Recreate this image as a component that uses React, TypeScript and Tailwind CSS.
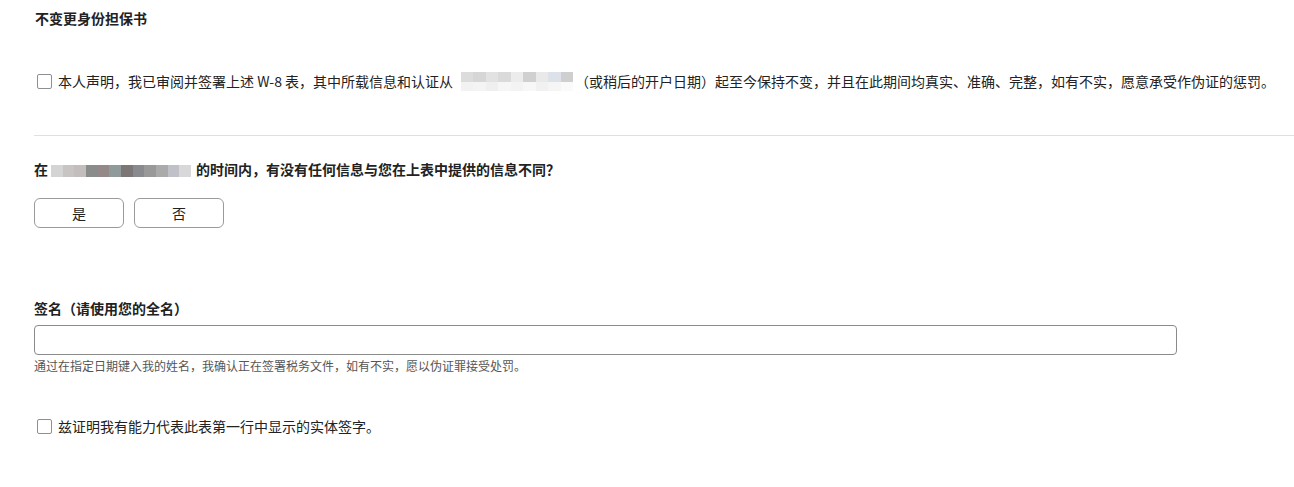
import { useState } from 'react';

const topMask = ['#dcdcdc', '#d6d6d6', '#e2e2e2', '#dadada', '#ececec', '#d0d0d0', '#e9e9e9', '#dde2ea', '#cfcfcf'];
const bottomMask = ['#f2f2f2', '#f4f4f4', '#efefef', '#f6f6f6', '#f3f3f3', '#f7f7f7', '#f1f1f1', '#f5f5f5', '#fafafa'];
const questionMask = ['#d4d4d4', '#c8c4c4', '#c3bdbd', '#8a8c8c', '#948888', '#8f9a9a', '#7c7676', '#888a90', '#999999', '#aaaaaa', '#c0c0c8', '#d8d8db'];

function Checkbox({ checked, onChange }: { checked: boolean; onChange: () => void }) {
    return (
        <button
            type="button"
            onClick={onChange}
            className="w-[15px] h-[15px] shrink-0 border border-[#8f8f8f] rounded-[2px] bg-white flex items-center justify-center"
        >
            {checked && (
                <svg viewBox="0 0 12 12" className="w-[11px] h-[11px]">
                    <path d="M2 6.5l2.5 2.5L10 3.5" fill="none" stroke="#333" strokeWidth="1.6" />
                </svg>
            )}
        </button>
    );
}

export default function App() {
    const [declare, setDeclare] = useState(false);
    const [authority, setAuthority] = useState(false);
    const [changed, setChanged] = useState<string | null>(null);
    const [name, setName] = useState('');

    return (
        <div
            className="min-h-[487px] bg-white pl-[34px] pt-[8px] text-[#222]"
            style={{ fontFamily: '"Noto Sans CJK SC", "Noto Sans", sans-serif' }}
        >
            <h3 className="text-[14px] leading-[20px] font-bold pl-[1px]">不变更身份担保书</h3>

            <label className="mt-[43px] flex items-center gap-[6px] pl-[3px] text-[14px] leading-[20px] whitespace-nowrap">
                <Checkbox checked={declare} onChange={() => setDeclare(!declare)} />
                <span className="flex items-center">
                    本人声明，我已审阅并签署上述 W-8 表，其中所载信息和认证从
                    <span className="inline-flex flex-col w-[112px] h-[19px] ml-[8px] mr-[2px] blur-[0.5px]">
                        <span className="flex h-[10px]">
                            {topMask.map((c, i) => (
                                <span key={i} className="flex-1" style={{ background: c }} />
                            ))}
                        </span>
                        <span className="flex h-[9px]">
                            {bottomMask.map((c, i) => (
                                <span key={i} className="flex-1" style={{ background: c }} />
                            ))}
                        </span>
                    </span>
                    （或稍后的开户日期）起至今保持不变，并且在此期间均真实、准确、完整，如有不实，愿意承受作伪证的惩罚。
                </span>
            </label>

            <div className="mt-[44px] border-t border-[#e0e0e0]" />

            <p className="mt-[23px] flex items-center text-[14px] leading-[20px] font-bold">
                在
                <span className="inline-flex w-[140px] h-[12px] mt-[4px] ml-[3px] mr-[5px] blur-[0.4px]">
                    {questionMask.map((c, i) => (
                        <span key={i} className="flex-1" style={{ background: c }} />
                    ))}
                </span>
                的时间内，有没有任何信息与您在上表中提供的信息不同？
            </p>

            <div className="mt-[19px] flex gap-[10px]">
                {['是', '否'].map((v) => (
                    <button
                        key={v}
                        type="button"
                        onClick={() => setChanged(v)}
                        className={`w-[90px] h-[30px] rounded-[6px] border text-[14px] ${
                            changed === v ? 'border-[#555] bg-[#f2f2f2]' : 'border-[#9a9a9a] bg-white'
                        }`}
                    >
                        {v}
                    </button>
                ))}
            </div>

            <p className="mt-[70px] text-[14px] leading-[20px] font-bold">签名（请使用您的全名）</p>

            <input
                type="text"
                value={name}
                onChange={(e) => setName(e.target.value)}
                className="mt-[7px] block w-[1143px] h-[30px] px-2 rounded-[4px] border border-[#8a8a8a] text-[14px] outline-none"
            />

            <p className="mt-[3px] text-[12px] leading-[16px] text-[#555]">
                通过在指定日期键入我的姓名，我确认正在签署税务文件，如有不实，愿以伪证罪接受处罚。
            </p>

            <label className="mt-[42px] flex items-center gap-[6px] pl-[3px] text-[14px] leading-[20px]">
                <Checkbox checked={authority} onChange={() => setAuthority(!authority)} />
                兹证明我有能力代表此表第一行中显示的实体签字。
            </label>
        </div>
    );
}
